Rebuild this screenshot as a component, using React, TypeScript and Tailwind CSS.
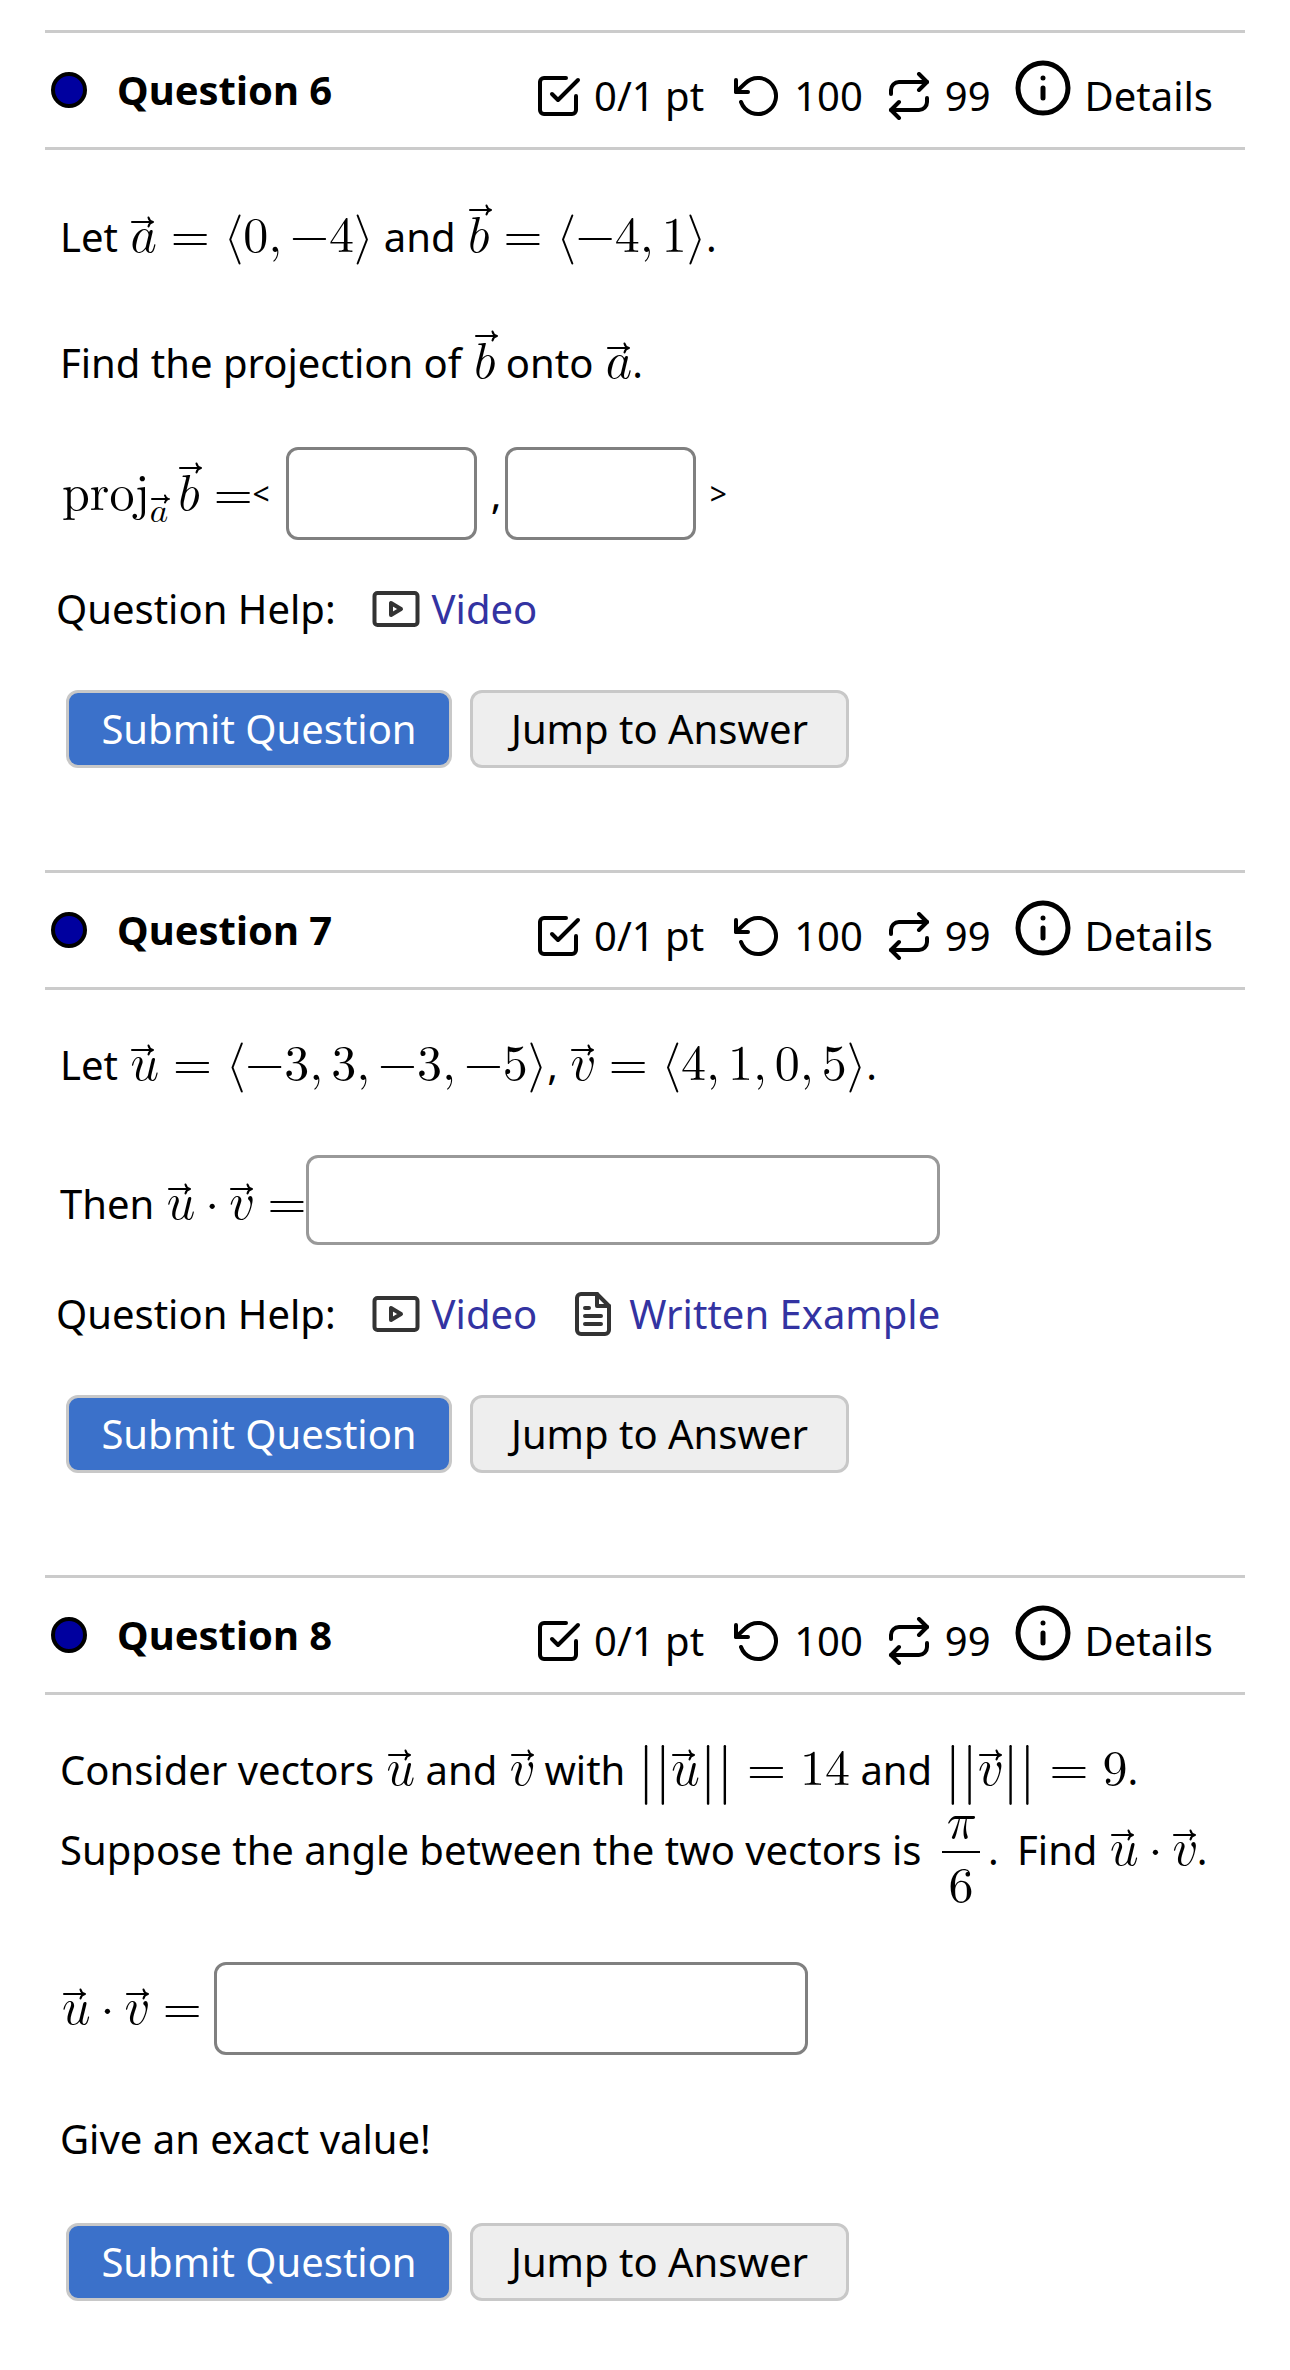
import type { ReactNode } from "react";

const STROKE = {
  fill: "none",
  stroke: "currentColor",
  strokeWidth: 2,
  strokeLinecap: "round",
  strokeLinejoin: "round",
} as const;

function CheckSquareIcon() {
  return (
    <svg viewBox="0 0 24 24" className="size-12 shrink-0" aria-hidden="true" {...STROKE}>
      <polyline points="9 11 12 14 22 4" />
      <path d="M21 12v7a2 2 0 0 1-2 2H5a2 2 0 0 1-2-2V5a2 2 0 0 1 2-2h11" />
    </svg>
  );
}

function RetryIcon() {
  return (
    <svg viewBox="0 0 24 24" className="size-12 shrink-0" aria-hidden="true" {...STROKE}>
      <polyline points="1 4 1 10 7 10" />
      <path d="M3.51 15a9 9 0 1 0 2.13-9.36L1 10" />
    </svg>
  );
}

function RepeatIcon() {
  return (
    <svg viewBox="0 0 24 24" className="size-12 shrink-0" aria-hidden="true" {...STROKE}>
      <polyline points="17 1 21 5 17 9" />
      <path d="M3 11V9a4 4 0 0 1 4-4h14" />
      <polyline points="7 23 3 19 7 15" />
      <path d="M21 13v2a4 4 0 0 1-4 4H3" />
    </svg>
  );
}

function InfoIcon() {
  return (
    <svg viewBox="0 0 24 24" className="size-[60px] shrink-0" aria-hidden="true" {...STROKE}>
      <circle cx="12" cy="12" r="10" />
      <path d="M12 16v-4M12 8h.01" />
    </svg>
  );
}

function VideoIcon() {
  return (
    <svg viewBox="0 0 24 24" className="size-12 shrink-0 text-[#333]" aria-hidden="true" {...STROKE}>
      <rect x="1.25" y="4" width="21.5" height="16" rx="1.5" />
      <path d="M9.5 9v6l5-3z" />
    </svg>
  );
}

function FileIcon() {
  return (
    <svg viewBox="0 0 24 24" className="size-12 shrink-0 text-[#333]" aria-hidden="true" {...STROKE}>
      <path d="M14 2H6a2 2 0 0 0-2 2v16a2 2 0 0 0 2 2h12a2 2 0 0 0 2-2V8z" />
      <path d="M14 2v6h6M16 13H8M16 17H8M10 9H8" />
    </svg>
  );
}

function M({ children }: { children: ReactNode }) {
  return (
    <span className="ml-0.5 font-['Latin_Modern_Math','Liberation_Serif',serif] text-[50px] leading-[0] whitespace-nowrap">
      {children}
    </span>
  );
}

/* A letter with a vector arrow; the arrow svg stands on the baseline and takes no width. */
function Vec({ children, tall = false }: { children: string; tall?: boolean }) {
  return (
    <>
      <svg
        viewBox={tall ? "0 0 24 48" : "0 0 24 36"}
        className={tall ? "-mr-6 inline h-12 w-6 align-baseline" : "-mr-6 inline h-9 w-6 align-baseline"}
        fill="none"
        stroke="currentColor"
        strokeWidth="2"
        strokeLinecap="round"
        strokeLinejoin="round"
        aria-hidden="true"
      >
        <path d="M2 6H23M18.500 1.500C19 4 20.500 5.500 23 6C20.500 6.500 19 8 18.500 10.500" />
      </svg>
      {children}
    </>
  );
}

function SubVecA() {
  return (
    <span className="align-[-12px] text-[35px]">
      <svg
        viewBox="0 0 20 28"
        className="-mr-5 inline h-7 w-5 align-baseline"
        fill="none"
        stroke="currentColor"
        strokeWidth="2"
        strokeLinecap="round"
        aria-hidden="true"
      >
        <path d="M2 5H18M15 1.500C15.500 3.500 16.500 4.500 18 5C16.500 5.500 15.500 6.500 15 8.500" />
      </svg>
      𝑎
    </span>
  );
}

const Eq = () => <span className="mx-3.5">=</span>;
const Comma = () => <span className="mr-2">,</span>;
const Dot = () => <span className="mx-2.5">·</span>;
const Bars = () => <span className="align-[-5px] text-[60px]">||</span>;

function Header({ n }: { n: number }) {
  return (
    <header className="flex min-h-[120px] items-center border-y-[3px] border-[#cbcbcb] pr-8 pl-1.5">
      <span className="size-9 shrink-0 rounded-full border-4 border-black bg-[#00009f]" />
      <h2 className="ml-[30px] font-bold whitespace-nowrap">Question {n}</h2>
      <div className="ml-auto flex items-center gap-[22px] pt-3 whitespace-nowrap">
        <span className="mr-2 flex items-center gap-3">
          <CheckSquareIcon />
          0/1 pt
        </span>
        <span className="flex items-center gap-3">
          <RetryIcon />
          100
        </span>
        <span className="flex items-center gap-3">
          <RepeatIcon />
          99
        </span>
        <button type="button" className="flex items-center gap-3">
          <span className="-mt-4">
            <InfoIcon />
          </span>
          Details
        </button>
      </div>
    </header>
  );
}

function Help({ written = false }: { written?: boolean }) {
  return (
    <div className="-ml-1 mt-[39px] flex items-center leading-[60px] whitespace-nowrap">
      <span>Question Help:</span>
      <a href="#video" className="ml-9 flex items-center gap-3 text-[#3333a2]">
        <VideoIcon />
        Video
      </a>
      {written && (
        <a href="#written-example" className="ml-8 flex items-center gap-3 text-[#3333a2]">
          <FileIcon />
          Written Example
        </a>
      )}
    </div>
  );
}

function Actions() {
  return (
    <div className="flex gap-[18px] pl-1.5">
      <button
        type="button"
        className="h-[78px] w-[386px] rounded-xl border-[3px] border-[#c8c8c8] bg-[#3b71ca] whitespace-nowrap text-white"
      >
        Submit Question
      </button>
      <button
        type="button"
        className="h-[78px] w-[379px] rounded-xl border-[3px] border-[#c8c8c8] bg-[#eee] whitespace-nowrap"
      >
        Jump to Answer
      </button>
    </div>
  );
}

export default function App() {
  return (
    <main className="min-h-screen bg-white px-[45px] pt-[30px] pb-[68px] font-['Noto_Sans',sans-serif] text-[40px] leading-[60px] text-black">
      <section>
        <Header n={6} />
        <div className="px-[15px] pt-[47px]">
          <p className="leading-[80px]">
            Let{" "}
            <M>
              <Vec>𝑎</Vec>
              <Eq />⟨0
              <Comma />
              −4⟩
            </M>{" "}
            and{" "}
            <M>
              <Vec tall>𝑏</Vec>
              <Eq />
              ⟨−4
              <Comma />
              1⟩
            </M>
            .
          </p>
          <p className="mt-[46px] leading-[80px]">
            Find the projection of{" "}
            <M>
              <Vec tall>𝑏</Vec>
            </M>{" "}
            onto{" "}
            <M>
              <Vec>𝑎</Vec>
            </M>
            .
          </p>
          <div className="mt-11 flex items-center whitespace-nowrap">
            <span>
              <M>
                proj
                <SubVecA />
                <span className="ml-2.5">
                  <Vec tall>𝑏</Vec>
                </span>
                <span className="ml-3.5">=</span>
              </M>
            </span>
            <span className="text-[30px]">&lt;</span>
            <input
              type="text"
              aria-label="First component"
              className="ml-4 h-[93px] w-[191px] rounded-xl border-[3px] border-[#808080] px-4"
            />
            <span className="w-7 pl-3.5">,</span>
            <input
              type="text"
              aria-label="Second component"
              className="mr-3.5 h-[93px] w-[191px] rounded-xl border-[3px] border-[#808080] px-4"
            />
            <span className="text-[30px]">&gt;</span>
          </div>
          <Help />
          <div className="mt-[51px]">
            <Actions />
          </div>
        </div>
      </section>

      <section className="mt-[102px]">
        <Header n={7} />
        <div className="px-[15px] pt-[35px]">
          <p className="leading-[80px]">
            Let{" "}
            <M>
              <Vec>𝑢</Vec>
              <Eq />
              ⟨−3
              <Comma />3
              <Comma />
              −3
              <Comma />
              −5⟩
            </M>
            ,{" "}
            <M>
              <Vec>𝑣</Vec>
              <Eq />
              ⟨4
              <Comma />1
              <Comma />0
              <Comma />
              5⟩
            </M>
            .
          </p>
          <div className="mt-[50px] flex items-center">
            <label htmlFor="q7" className="pt-2 whitespace-nowrap">
              Then{" "}
              <M>
                <Vec>𝑢</Vec>
                <Dot />
                <Vec>𝑣</Vec>
                <span className="ml-3.5">=</span>
              </M>
            </label>
            <input id="q7" type="text" className="h-[90px] w-[634px] rounded-xl border-[3px] border-[#999] px-4" />
          </div>
          <Help written />
          <div className="mt-[51px]">
            <Actions />
          </div>
        </div>
      </section>

      <section className="mt-[102px]">
        <Header n={8} />
        <div className="px-[15px] pt-[35px]">
          <p className="leading-[80px]">
            Consider vectors{" "}
            <M>
              <Vec>𝑢</Vec>
            </M>{" "}
            and{" "}
            <M>
              <Vec>𝑣</Vec>
            </M>{" "}
            with{" "}
            <M>
              <Bars />
              <Vec>𝑢</Vec>
              <Bars />
              <Eq />
              14
            </M>{" "}
            and{" "}
            <M>
              <Bars />
              <Vec>𝑣</Vec>
              <Bars />
              <Eq />9
            </M>
            .
            <br />
            Suppose the angle between the two vectors is{" "}
            <M>
              <span className="-mt-6 -mb-8 mx-2 inline-flex flex-col items-center align-middle">
                <span className="leading-[56px]">𝜋</span>
                <span className="w-[38px] border-t-2 border-black text-center leading-[68px]">6</span>
              </span>
            </M>
            . <span className="ml-2">Find</span>{" "}
            <M>
              <Vec>𝑢</Vec>
              <Dot />
              <Vec>𝑣</Vec>
            </M>
            .
          </p>
          <div className="mt-[72px] flex items-center">
            <label htmlFor="q8" className="whitespace-nowrap">
              <M>
                <Vec>𝑢</Vec>
                <Dot />
                <Vec>𝑣</Vec>
                <span className="mr-3 ml-3.5">=</span>
              </M>
            </label>
            <input id="q8" type="text" className="h-[93px] w-[594px] rounded-xl border-[3px] border-[#808080] px-4" />
          </div>
          <p className="mt-11 leading-[80px]">Give an exact value!</p>
          <div className="mt-11">
            <Actions />
          </div>
        </div>
      </section>
    </main>
  );
}
